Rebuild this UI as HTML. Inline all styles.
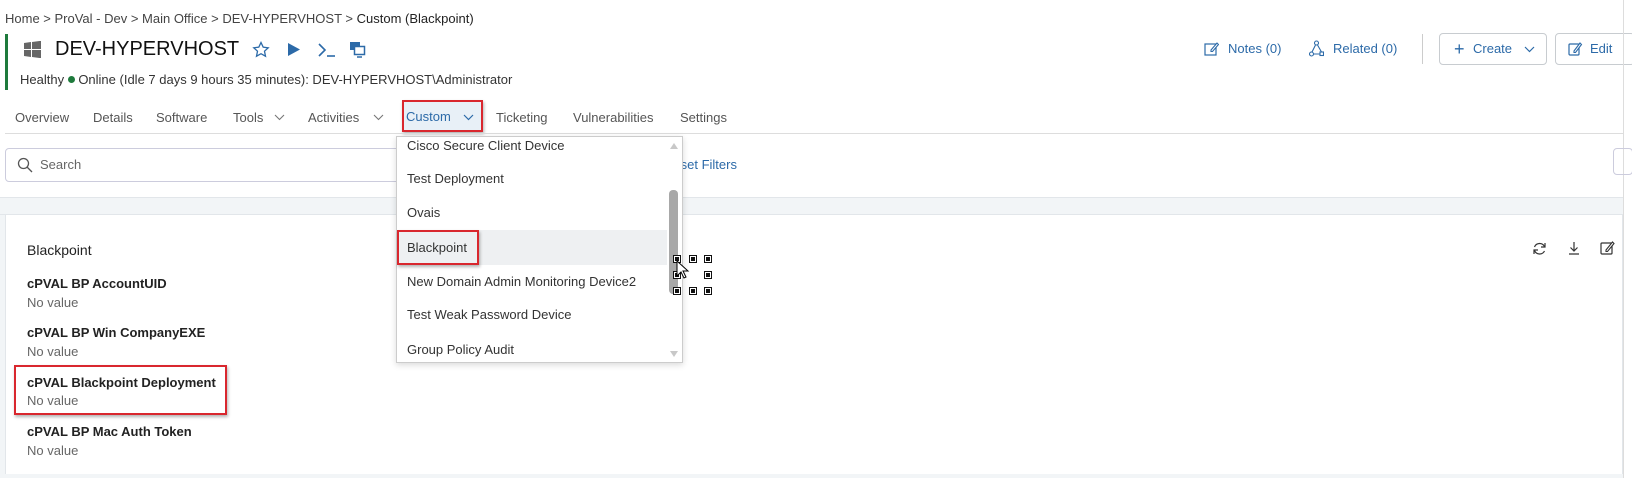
<!DOCTYPE html>
<html><head><meta charset="utf-8"><style>
*{box-sizing:border-box;margin:0;padding:0}
body{width:1632px;height:478px;overflow:hidden;background:#fff;font-family:"Liberation Sans",sans-serif;color:#222;position:relative}
.a{position:absolute;white-space:nowrap}
.t{font-size:13px}
.blue{color:#2c6aa8}
.rb{position:absolute;border:2px solid #d9272e;box-shadow:1px 2px 3px rgba(0,0,0,.3)}
.lbl{font-size:13px;font-weight:bold;color:#222}
.val{font-size:13px;color:#666}
.dd{font-size:13px;color:#333}
.sq{position:absolute;width:6px;height:6px;background:#111;border:1px solid #fff;outline:1px solid #111}
</style></head><body>
<div class="a t" style="left:5px;top:11px;color:#444">Home &gt; ProVal - Dev &gt; Main Office &gt; DEV-HYPERVHOST &gt; <span style="color:#222">Custom (Blackpoint)</span></div>
<div class="a" style="left:5px;top:34px;width:3px;height:56px;background:#1e7a3c"></div>
<svg class="a" style="left:24px;top:41px" width="17" height="17" viewBox="0 0 17 17"><path fill="#666" d="M0 2l7-1v7H0zM8 1l9-1.2V8H8zM0 9h7v7l-7-1zM8 9h9v8.2L8 16z"/></svg>
<div class="a" style="left:55px;top:38px;font-size:20px;color:#111">DEV-HYPERVHOST</div>
<svg class="a" style="left:252px;top:41px" width="18" height="18" viewBox="0 0 18 18"><path fill="none" stroke="#2c6aa8" stroke-width="1.3" d="M9 1.5l2.2 4.7 5 .6-3.7 3.4 1 5-4.5-2.5-4.5 2.5 1-5L1.8 6.8l5-.6z"/></svg>
<svg class="a" style="left:287px;top:42px" width="14" height="15"><path fill="#2c6aa8" d="M1 1l12 6.5L1 14z"/></svg>
<svg class="a" style="left:318px;top:43px" width="18" height="15"><path fill="none" stroke="#2c6aa8" stroke-width="1.6" d="M1 1l6 6-6 6"/><path stroke="#2c6aa8" stroke-width="1.6" d="M9 13h8"/></svg>
<svg class="a" style="left:349px;top:41px" width="17" height="17"><rect x="1" y="1" width="10" height="8" fill="#2c6aa8"/><rect x="5.5" y="5.5" width="10" height="8" fill="#fff" stroke="#2c6aa8" stroke-width="1.5"/><path stroke="#2c6aa8" stroke-width="1.5" d="M8 16h5"/></svg>
<div class="a t" style="left:20px;top:72px;color:#333">Healthy <span style="display:inline-block;width:7px;height:7px;border-radius:50%;background:#1e7a3c;vertical-align:1px"></span> Online (Idle 7 days 9 hours 35 minutes): DEV-HYPERVHOST\Administrator</div>

<svg class="a" style="left:1204px;top:41px" width="15" height="15"><rect x="1" y="3" width="11" height="11" fill="none" stroke="#2c6aa8" stroke-width="1.2"/><path d="M7 9l6-7 1.5 1.5-6 7H7z" fill="#fff" stroke="#2c6aa8" stroke-width="1.1"/></svg>
<div class="a t blue" style="left:1228px;top:41px">Notes (0)</div>
<svg class="a" style="left:1309px;top:40px" width="15" height="17"><g fill="none" stroke="#2c6aa8" stroke-width="1.1"><circle cx="7.5" cy="3" r="2"/><circle cx="2.5" cy="14" r="2"/><rect x="11" y="12" width="3.5" height="3.5"/><path d="M6.5 5L3 12M8.5 5l4 7M4.5 14H11"/></g></svg>
<div class="a t blue" style="left:1333px;top:41px">Related (0)</div>
<div class="a" style="left:1422px;top:34px;width:1px;height:30px;background:#ccc"></div>
<div class="a" style="left:1439px;top:33px;width:108px;height:32px;border:1px solid #c8ccd0;border-radius:4px"></div>
<div class="a blue" style="left:1454px;top:39px;font-size:18px">+</div>
<div class="a t blue" style="left:1473px;top:41px">Create</div>
<svg class="a" style="left:1524px;top:46px" width="11" height="7"><path d="M1 1l4.5 4.5L10 1" fill="none" stroke="#2c6aa8" stroke-width="1.2"/></svg>
<div class="a" style="left:1555px;top:33px;width:80px;height:32px;border:1px solid #c8ccd0;border-radius:4px"></div>
<svg class="a" style="left:1568px;top:41px" width="15" height="15"><rect x="1" y="3" width="10" height="11" rx="1" fill="none" stroke="#2c6aa8" stroke-width="1.2"/><path d="M6 10l6-8 1.5 1.5-6 8H6z" fill="#fff" stroke="#2c6aa8" stroke-width="1.1"/></svg>
<div class="a t blue" style="left:1590px;top:41px">Edit</div>
<div class="a" style="left:1623px;top:0;width:1px;height:478px;background:#ddd"></div>

<div class="a t" style="left:15px;top:110px;color:#555">Overview</div>
<div class="a t" style="left:93px;top:110px;color:#555">Details</div>
<div class="a t" style="left:156px;top:110px;color:#555">Software</div>
<div class="a t" style="left:233px;top:110px;color:#555">Tools</div>
<svg class="a" style="left:274px;top:114px" width="11" height="7"><path d="M1 1l4.5 4.5L10 1" fill="none" stroke="#777" stroke-width="1.1"/></svg>
<div class="a t" style="left:308px;top:110px;color:#555">Activities</div>
<svg class="a" style="left:373px;top:114px" width="11" height="7"><path d="M1 1l4.5 4.5L10 1" fill="none" stroke="#777" stroke-width="1.1"/></svg>
<div class="a" style="left:402px;top:100px;width:81px;height:32px;background:#e8f0f7"></div>
<div class="a t blue" style="left:406px;top:109px">Custom</div>
<svg class="a" style="left:463px;top:114px" width="11" height="7"><path d="M1 1l4.5 4.5L10 1" fill="none" stroke="#2c6aa8" stroke-width="1.2"/></svg>
<div class="rb" style="left:402px;top:100px;width:81px;height:32px"></div>
<div class="a t" style="left:496px;top:110px;color:#555">Ticketing</div>
<div class="a t" style="left:573px;top:110px;color:#555">Vulnerabilities</div>
<div class="a t" style="left:680px;top:110px;color:#555">Settings</div>
<div class="a" style="left:5px;top:133px;width:1618px;height:1px;background:#ddd"></div>

<div class="a" style="left:5px;top:148px;width:420px;height:34px;border:1px solid #ccd;border-radius:4px"></div>
<svg class="a" style="left:17px;top:157px" width="16" height="16"><circle cx="6.5" cy="6.5" r="5" fill="none" stroke="#555" stroke-width="1.3"/><path d="M10 10l5 5" stroke="#555" stroke-width="1.3"/></svg>
<div class="a t" style="left:40px;top:157px;color:#666">Search</div>
<div class="a t blue" style="left:664px;top:157px">Reset Filters</div>
<div class="a" style="left:1613px;top:148px;width:20px;height:27px;border:1px solid #ccd;border-radius:4px"></div>

<div class="a" style="left:0;top:197px;width:1623px;height:18px;background:#f2f5f7;border-top:1px solid #e2e6ea;border-bottom:1px solid #e2e6ea"></div>
<div class="a" style="left:0;top:215px;width:5px;height:263px;background:#f2f5f7"></div>
<div class="a" style="left:5px;top:215px;width:1618px;height:260px;border:1px solid #e2e6ea;border-top:none"></div>
<div class="a" style="left:0;top:474px;width:1623px;height:4px;background:#f2f5f7"></div>

<div class="a" style="left:27px;top:242px;font-size:14px;color:#222">Blackpoint</div>
<svg class="a" style="left:1532px;top:241px" width="15" height="15"><path d="M12.5 5.5A5.5 5.5 0 0 0 2.5 6M2.5 9.5a5.5 5.5 0 0 0 10 .5" fill="none" stroke="#333" stroke-width="1.2"/><path d="M13 2v4H9M2 13V9h4" fill="none" stroke="#333" stroke-width="1.2"/></svg>
<svg class="a" style="left:1567px;top:241px" width="14" height="14"><path d="M7 1v9M3.5 6.5L7 10l3.5-3.5M2 13h10" fill="none" stroke="#333" stroke-width="1.2"/></svg>
<svg class="a" style="left:1600px;top:240px" width="15" height="15"><rect x="1" y="3" width="11" height="11" rx="1" fill="none" stroke="#333" stroke-width="1.2"/><path d="M6 10l6.5-8 1.5 1.5-6.5 8H6z" fill="#fff" stroke="#333" stroke-width="1.1"/></svg>

<div class="a lbl" style="left:27px;top:276px">cPVAL BP AccountUID</div>
<div class="a val" style="left:27px;top:295px">No value</div>
<div class="a lbl" style="left:27px;top:325px">cPVAL BP Win CompanyEXE</div>
<div class="a val" style="left:27px;top:344px">No value</div>
<div class="a lbl" style="left:27px;top:375px">cPVAL Blackpoint Deployment</div>
<div class="a val" style="left:27px;top:393px">No value</div>
<div class="rb" style="left:14px;top:365px;width:213px;height:50px"></div>
<div class="a lbl" style="left:27px;top:424px">cPVAL BP Mac Auth Token</div>
<div class="a val" style="left:27px;top:443px">No value</div>

<div class="a" style="left:396px;top:136px;width:287px;height:227px;background:#fff;border:1px solid #ccc;box-shadow:0 2px 6px rgba(0,0,0,.15)"></div>
<div class="a" style="left:397px;top:230px;width:270px;height:35px;background:#eef0f2"></div>
<div class="a dd" style="left:407px;top:138px">Cisco Secure Client Device</div>
<div class="a dd" style="left:407px;top:171px">Test Deployment</div>
<div class="a dd" style="left:407px;top:205px">Ovais</div>
<div class="a dd" style="left:407px;top:240px">Blackpoint</div>
<div class="a dd" style="left:407px;top:274px">New Domain Admin Monitoring Device2</div>
<div class="a dd" style="left:407px;top:307px">Test Weak Password Device</div>
<div class="a dd" style="left:407px;top:342px">Group Policy Audit</div>
<div class="rb" style="left:397px;top:230px;width:82px;height:35px"></div>
<svg class="a" style="left:670px;top:143px" width="8" height="6"><path d="M0 6L4 0l4 6z" fill="#c8c8c8"/></svg>
<svg class="a" style="left:670px;top:351px" width="8" height="6"><path d="M0 0l4 6 4-6z" fill="#c8c8c8"/></svg>
<div class="a" style="left:669px;top:190px;width:9px;height:104px;background:#a8a8a8;border-radius:4px"></div>
<div class="sq" style="left:674px;top:256px"></div><div class="sq" style="left:690px;top:256px"></div><div class="sq" style="left:705px;top:256px"></div>
<div class="sq" style="left:674px;top:272px"></div><div class="sq" style="left:705px;top:272px"></div>
<div class="sq" style="left:674px;top:288px"></div><div class="sq" style="left:690px;top:288px"></div><div class="sq" style="left:705px;top:288px"></div>
<svg class="a" style="left:676px;top:260px" width="14" height="20"><path d="M1 1v15l4-4 3 6 2-1-3-6h5z" fill="#fff" stroke="#000" stroke-width="1"/></svg>
</body></html>
